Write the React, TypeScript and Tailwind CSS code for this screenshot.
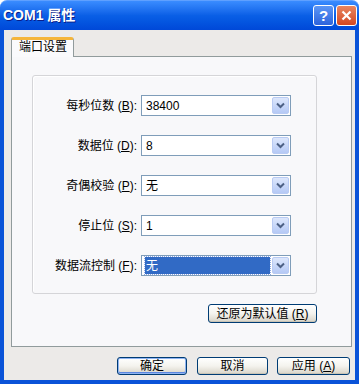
import React from 'react';

const font = { fontFamily: '"Liberation Sans", "Noto Sans CJK SC", sans-serif' };

function Chevron() {
  return (
    <svg width="9" height="7" viewBox="0 0 9 7">
      <path d="M1 1.5 L4.5 5 L8 1.5" fill="none" stroke="#4D6185" strokeWidth="2" />
    </svg>
  );
}

function Select({ value, active }: { value: string; active?: boolean }) {
  return (
    <div className="w-[150px] h-[21px] border border-[#7F9DB9] bg-white flex items-center p-px">
      <div className="flex-1 h-full flex items-center pl-[2px] pr-[2px]">
        {active ? (
          <div className="h-full w-full bg-[#316AC5] text-white flex items-center px-[1px] outline-1 outline-dotted outline-[#8EA8E0]">
            {value}
          </div>
        ) : (
          <span className="pl-[1px] text-black">{value}</span>
        )}
      </div>
      <div className="w-[17px] h-full rounded-[2px] border border-[#B9CBF3] bg-gradient-to-b from-[#DDE7FC] to-[#B5C9F5] flex items-center justify-center">
        <Chevron />
      </div>
    </div>
  );
}

function Row({ label, keyChar, value, active }: { label: string; keyChar: string; value: string; active?: boolean }) {
  return (
    <div className="flex items-center">
      <div className="w-[104px] text-right text-[12px] text-black whitespace-nowrap">
        {label} (<span className="underline">{keyChar}</span>):
      </div>
      <div className="ml-[4px] text-[12px]">
        <Select value={value} active={active} />
      </div>
    </div>
  );
}

function XpButton({ children, isDefault, className }: { children: React.ReactNode; isDefault?: boolean; className?: string }) {
  return (
    <div
      className={`h-[18px] rounded-[3px] border border-[#003C74] bg-gradient-to-b from-white via-[#F4F3EE] to-[#D8D4C8] flex items-center justify-center text-[12px] text-black ${
        isDefault ? 'shadow-[inset_0_0_0_1px_#8FB4F2,inset_0_-1px_0_1px_#5B86E0]' : 'shadow-[inset_0_-1px_0_0_#C9C4B6]'
      } ${className ?? ''}`}
    >
      {children}
    </div>
  );
}

export default function App() {
  return (
    <div className="w-[362px] h-[387px] bg-white" style={font}>
      <div className="w-[359px] h-[384px] flex flex-col">
        {/* Title bar */}
        <div className="h-[30px] rounded-t-[7px] bg-gradient-to-b from-[#3A8CFF] via-[#0A5FE6] to-[#0048D8] border-t border-[#5FA0FF] flex items-center pl-[3px] pr-[2px]">
          <span className="text-white font-bold text-[14px] [text-shadow:1px_1px_0_#0A1E8A]">COM1 属性</span>
          <div className="ml-auto flex gap-[2px]">
            <div className="w-[21px] h-[21px] rounded-[3px] border border-white bg-gradient-to-b from-[#5C96F5] to-[#2D63DC] flex items-center justify-center text-white font-bold text-[15px] leading-none">
              ?
            </div>
            <div className="w-[21px] h-[21px] rounded-[3px] border border-white bg-gradient-to-b from-[#E8855F] to-[#D34620] flex items-center justify-center">
              <svg width="11" height="11" viewBox="0 0 11 11">
                <path d="M1.5 1.5 L9.5 9.5 M9.5 1.5 L1.5 9.5" stroke="white" strokeWidth="2.2" />
              </svg>
            </div>
          </div>
        </div>

        {/* Body */}
        <div className="flex-1 border-x-4 border-b-4 border-[#0A53D8] bg-[#ECEAE8] flex flex-col pt-[7px] pl-[7px] pr-[3px]">
          {/* Tab strip */}
          <div className="flex h-[19px]">
            <div className="relative z-10 w-[63px] h-[20px] rounded-t-[3px] border-x border-[#919B9C] border-t-[3px] border-t-[#F5B53A] bg-[#FAFAFC] pl-[7px] text-[12px] text-black leading-[15px]">
              端口设置
            </div>
          </div>

          {/* Tab page */}
          <div className="h-[291px] border border-[#919B9C] bg-[#F8F8FA] pl-[20px] pt-[18px] flex flex-col">
            <div className="w-[285px] h-[219px] border border-[#D5D5D8] rounded-[3px] shadow-[inset_1px_1px_0_white] pt-[19px] flex flex-col gap-[19px]">
              <Row label="每秒位数" keyChar="B" value="38400" />
              <Row label="数据位" keyChar="D" value="8" />
              <Row label="奇偶校验" keyChar="P" value="无" />
              <Row label="停止位" keyChar="S" value="1" />
              <Row label="数据流控制" keyChar="F" value="无" active />
            </div>
            <div className="w-[285px] flex justify-end mt-[10px]">
              <XpButton className="w-[109px] h-[19px]">
                还原为默认值 (<span className="underline">R</span>)
              </XpButton>
            </div>
          </div>

          {/* Dialog buttons */}
          <div className="flex mt-[10px] pl-[106px] gap-[11px]">
            <XpButton isDefault className="w-[70px]">确定</XpButton>
            <XpButton className="w-[71px] -ml-[1px]">取消</XpButton>
            <XpButton className="w-[73px] -ml-[2px]">
              应用 (<span className="underline">A</span>)
            </XpButton>
          </div>
        </div>
      </div>
    </div>
  );
}
